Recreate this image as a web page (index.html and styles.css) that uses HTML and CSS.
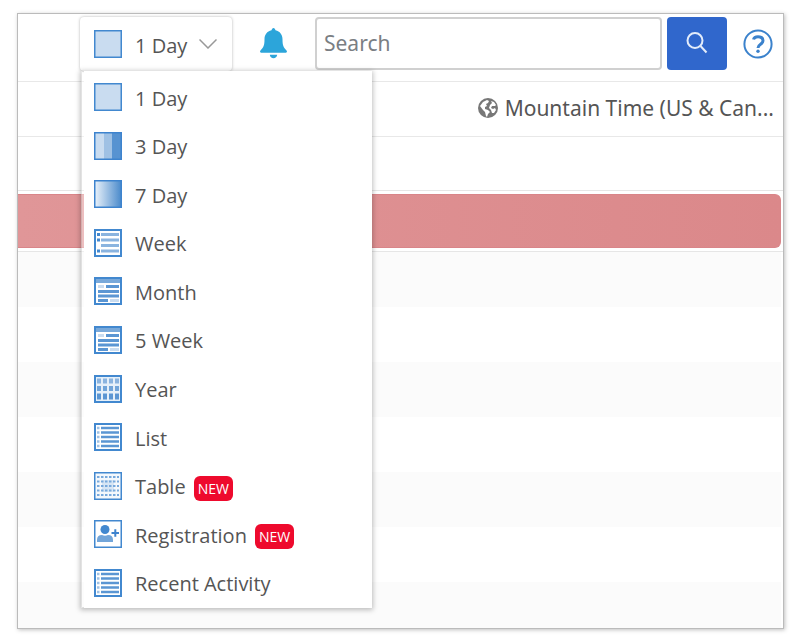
FILE: index.html
```html
<!DOCTYPE html>
<html lang="en">
<head>
<meta charset="utf-8">
<meta name="viewport" content="width=device-width, initial-scale=1">
<title>Calendar</title>
<link rel="stylesheet" href="styles.css">
</head>
<body>
<svg class="sprite" aria-hidden="true">
  <defs>
    <linearGradient id="fade"><stop offset="0" stop-color="#eaf2fa"/><stop offset="1" stop-color="#4a8acb"/></linearGradient>
    <symbol id="i-day" viewBox="0 0 28 28"><path fill="#c9dcf0" stroke="#4288cf" stroke-width="1.5" d="M.75.75h26.5v26.5H.75z"/></symbol>
    <symbol id="i-three" viewBox="0 0 28 28"><path fill="#c9dcf0" d="M0 0h10v28H0z"/><path fill="#9fc1e4" d="M10 0h8v28h-8z"/><path fill="#5793d1" d="M18 0h10v28H18z"/><path fill="none" stroke="#3d83ce" stroke-width="1.5" d="M.75.75h26.5v26.5H.75z"/></symbol>
    <symbol id="i-seven" viewBox="0 0 28 28"><path fill="url(#fade)" stroke="#3d83ce" stroke-width="1.5" d="M.75.75h26.5v26.5H.75z"/></symbol>
    <symbol id="i-week" viewBox="0 0 28 28"><path fill="#fff" stroke="#4288cf" stroke-width="2" d="M1 1h26v26H1z"/><path stroke="#8bb4df" stroke-width="3" d="M7 5.500h18M7 11h18M7 16.500h18M7 22h18"/><path stroke="#4288cf" stroke-width="3" d="M3 5.500h3M3 11h3M3 22h3"/></symbol>
    <symbol id="i-month" viewBox="0 0 28 28"><path fill="#fff" stroke="#4288cf" stroke-width="2" d="M1 1h26v26H1z"/><path fill="#79a9da" d="M2 2h24v4H2z"/><path stroke="#5b96d3" stroke-width="3" d="M12 9.500h13M4 14.500h21M4 19h21M4 23.500h10"/><path stroke="#c9dcf0" stroke-width="3" d="M4 9.500h6M16 23.500h9"/></symbol>
    <symbol id="i-year" viewBox="0 0 28 28"><path fill="#e6f0f9" stroke="#4288cf" stroke-width="2" d="M1 1h26v26H1z"/><path stroke="#8bb4df" stroke-width="5" stroke-dasharray="4 2" d="M3 6h22"/><path stroke="#72a5d9" stroke-width="5" stroke-dasharray="4 2" d="M3 13.500h22"/><path stroke="#5b96d3" stroke-width="6" stroke-dasharray="4 2" d="M3 21.500h22"/></symbol>
    <symbol id="i-list" viewBox="0 0 28 28"><path fill="#fff" stroke="#4288cf" stroke-width="2" d="M1 1h26v26H1z"/><path stroke="#5b96d3" stroke-width="2.500" d="M7 5h18M7 9.500h18M7 14h18M7 18.500h18M7 23h18"/><path stroke="#9fc1e4" stroke-width="2.500" d="M3 5h2.500M3 9.500h2.500M3 14h2.500M3 18.500h2.500M3 23h2.500"/></symbol>
    <symbol id="i-table" viewBox="0 0 28 28"><path fill="#f4f8fc" stroke="#4288cf" stroke-width="1.500" d="M.75.75h26.500v26.500H.75z"/><path fill="#d7e6f5" d="M8 8h12v12H8z"/><path stroke="#78a9dc" stroke-width="2" stroke-dasharray="2.500 1.500" d="M3 5h22M3 9.500h22M3 14h22M3 18.500h22M3 23h22"/></symbol>
    <symbol id="i-person" viewBox="0 0 28 28"><path fill="#fff" stroke="#4288cf" stroke-width="1.500" d="M.75.75h26.500v26.500H.75z"/><circle cx="11" cy="9.500" r="4.500" fill="#4288cf"/><path fill="#72a5d9" d="M3 22v-2q0-5 5-5 3 1.500 6 0 5 0 5 5v2z"/><path stroke="#3d83ce" stroke-width="2" d="M17.500 13h7.500M21.300 9.200v7.500"/></symbol>
  </defs>
</svg>
<main class="frame">
  <header class="toolbar">
    <button class="view-button" type="button" aria-haspopup="true" aria-expanded="true">
      <svg class="icon"><use href="#i-day"/></svg>
      <span>1 Day</span>
      <svg class="chevron" viewBox="0 0 18 10"><path d="M.5.5 9 9 17.500.5"/></svg>
    </button>
    <button class="bell" type="button" aria-label="Notifications">
      <svg viewBox="0 0 27 31"><path d="M13.500 0c1 0 1.700 1 2 2.300 4.500 1 7 4.500 7 9 0 6.200 1 8.200 4 11.200.9 1 .4 2.300-1 2.300h-24c-1.400 0-1.900-1.300-1-2.300 3-3 4-5 4-11.200 0-4.500 2.500-8 7-9C11.800 1 12.500 0 13.500 0z"/><path d="M9.800 26.800h7.400c-.2 2-1.800 3.400-3.700 3.400s-3.500-1.400-3.700-3.400z"/></svg>
    </button>
    <form class="search">
      <input type="search" placeholder="Search" aria-label="Search">
      <button type="button" aria-label="Run search"><svg viewBox="0 0 22 22"><circle cx="9" cy="8.500" r="7.500"/><path d="m14.500 14 6 6.500"/></svg></button>
    </form>
    <a class="help" href="#" aria-label="Help"><svg viewBox="0 0 30 30"><circle cx="15" cy="15" r="13.600"/><path class="hook" d="M10.500 10.500C11 8.500 12.800 7.800 15 7.800c3 0 5 1.500 5 4 0 3.700-5 3.200-5 7.200"/><circle class="dot" cx="15" cy="22.300" r="1.700"/></svg></a>
  </header>
  <div class="zone">
    <svg viewBox="0 0 20 20"><circle cx="10" cy="10" r="10" fill="#777"/><path fill="#fff" d="M2 8l3-4 4-2 2 1-1 2-2 1 1 2-2 1 0 2 3 1 2 2-2 2-1 3-1-1-1-4-2-2zM13 3l3 1 2 3-1 1-3 0-1 2 2 1 2-1 1 2-2 3-2 0-1-3-2-2 1-3 2-2z"/></svg>
    <span>Mountain Time (US &amp; Can...</span>
  </div>
  <div class="heading-row"></div>
  <div class="event-row"><div class="event"></div></div>
  <div class="slots">
    <div></div><div></div><div></div><div></div><div></div><div></div><div></div>
  </div>
  <nav class="menu" aria-label="Calendar view">
    <button type="button"><svg class="icon"><use href="#i-day"/></svg><span>1 Day</span></button>
    <button type="button"><svg class="icon"><use href="#i-three"/></svg><span>3 Day</span></button>
    <button type="button"><svg class="icon"><use href="#i-seven"/></svg><span>7 Day</span></button>
    <button type="button"><svg class="icon"><use href="#i-week"/></svg><span>Week</span></button>
    <button type="button"><svg class="icon"><use href="#i-month"/></svg><span>Month</span></button>
    <button type="button"><svg class="icon"><use href="#i-month"/></svg><span>5 Week</span></button>
    <button type="button"><svg class="icon"><use href="#i-year"/></svg><span>Year</span></button>
    <button type="button"><svg class="icon"><use href="#i-list"/></svg><span>List</span></button>
    <button type="button"><svg class="icon"><use href="#i-table"/></svg><span>Table</span><b class="tag">NEW</b></button>
    <button type="button"><svg class="icon"><use href="#i-person"/></svg><span>Registration</span><b class="tag">NEW</b></button>
    <button type="button"><svg class="icon"><use href="#i-list"/></svg><span>Recent Activity</span></button>
  </nav>
</main>
</body>
</html>
```
FILE: styles.css
```css
* { box-sizing: border-box; }
body {
  display: flex;
  min-height: 100vh;
  margin: 0;
  padding: 14px 17px 13px 18px;
  background: #fff;
  color: #555;
  font-family: "Open Sans", "Noto Sans", sans-serif;
  font-size: 20px;
}
button { margin: 0; padding: 0; border: 0; background: none; color: inherit; font: inherit; cursor: pointer; }
svg { display: block; flex: none; }
.sprite { position: absolute; width: 0; height: 0; }
.icon { width: 28px; height: 28px; }

.frame {
  position: relative;
  display: flex;
  flex: 1;
  flex-direction: column;
  min-width: 0;
  background: #fff;
  box-shadow: 0 0 0 1px #bbb, 1px 1px 4px 1px rgba(0, 0, 0, .25);
}

.toolbar {
  display: flex;
  align-items: center;
  height: 68px;
  padding: 0 10px 8px 62px;
  border-bottom: 1px solid #e8e8e8;
}
.view-button {
  display: flex;
  align-items: center;
  width: 152px;
  height: 54px;
  padding-left: 14px;
  border-radius: 4px;
  box-shadow: 0 0 3px rgba(0, 0, 0, .3);
  font-weight: 500;
}
.view-button span { margin: 0 12px 0 13px; padding-top: 3px; }
.chevron { width: 18px; height: 10px; fill: none; stroke: #999; stroke-width: 1.5; }
.bell { margin: 0 28px; }
.bell svg { width: 27px; height: 31px; fill: #2ca5da; }
.search { display: flex; flex: 1; gap: 5px; min-width: 0; }
.search input {
  flex: 1;
  min-width: 0;
  height: 53px;
  margin: 0;
  padding: 0 7px 2px;
  border: 2px solid #d0d0d0;
  border-radius: 4px;
  outline: 0;
  background: #fff;
  color: #555;
  font: 21px "Noto Sans", sans-serif;
  appearance: none;
}
.search input::placeholder { color: #7a7e83; opacity: 1; }
.search button {
  display: flex;
  align-items: center;
  justify-content: center;
  width: 60px;
  height: 53px;
  padding-bottom: 2px;
  border-radius: 4px;
  background: #3067cc;
}
.search button svg { width: 22px; height: 22px; fill: none; stroke: #e3ecfa; stroke-width: 2; }
.help { margin-left: 16px; }
.help svg { width: 30px; height: 30px; fill: none; stroke: #3b82cc; stroke-width: 2; }
.help .hook { stroke-width: 3; }
.help .dot { fill: #3b82cc; stroke: none; }

.zone {
  display: flex;
  align-items: center;
  justify-content: flex-end;
  gap: 7px;
  height: 55px;
  padding: 0 9px 2px 0;
  border-bottom: 1px solid #e8e8e8;
  font-family: "Noto Sans", sans-serif;
  font-size: 21px;
  white-space: nowrap;
}
.zone svg { width: 20px; height: 20px; }
.heading-row { height: 54px; border-bottom: 1px solid #e6e6e6; }
.event-row { height: 61px; padding: 3px 2px 3px 0; border-bottom: 1px solid #e6e6e6; }
.event {
  height: 54px;
  border: 1px solid #d98589;
  border-left: 0;
  border-radius: 0 6px 6px 0;
  background: linear-gradient(90deg, #e09698, #db888a);
}
.slots { display: flex; flex: 1; flex-direction: column; padding-right: 2px; }
.slots div { flex: 0 0 55px; }
.slots div:last-child { flex: 1 0 46px; }
.slots div:nth-child(odd) { background: #fbfbfb; }

.menu {
  position: absolute;
  top: 57px;
  left: 63px;
  display: grid;
  grid-auto-rows: 1fr;
  width: 291px;
  min-height: 537px;
  padding: 3px 0 0;
  border-left: 3px solid rgba(255, 255, 255, .4);
  background: #fff;
  background-clip: padding-box;
  box-shadow: 0 1px 5px 1px rgba(0, 0, 0, .25);
}
.menu button { display: flex; align-items: center; padding-left: 10px; text-align: left; }
.menu .icon { margin-bottom: 2px; }
.menu span { margin-left: 13px; }
.tag {
  height: 25px;
  margin: 3px 0 0 8px;
  padding: 0 4px;
  border-radius: 6px;
  background: #ee0a2d;
  color: #fff;
  font-size: 14px;
  font-weight: 400;
  line-height: 25px;
}
```
